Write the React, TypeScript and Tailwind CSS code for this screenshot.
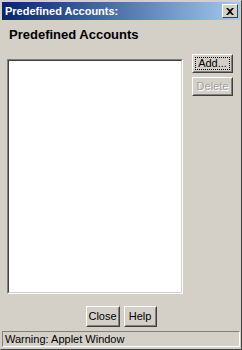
import React from "react";

const font = { fontFamily: "'Liberation Sans', Arial, sans-serif" };

function Btn({ children, disabled, focused, className = "" }: { children: React.ReactNode; disabled?: boolean; focused?: boolean; className?: string }) {
  return (
    <div className={`border border-t-white border-l-white border-r-[#404040] border-b-[#404040] ${className}`}>
      <div className="h-full border border-t-[#d4d0c8] border-l-[#d4d0c8] border-r-[#808080] border-b-[#808080] flex items-center justify-center p-[2px]">
        <div className={`h-full w-full flex items-center justify-center ${focused ? "outline outline-1 outline-dotted outline-black" : ""}`}>
          <span
            className={`text-[11px] leading-none ${disabled ? "text-[#a0a0a0]" : "text-black"}`}
            style={disabled ? { textShadow: "1px 1px 0 #fff" } : undefined}
          >
            {children}
          </span>
        </div>
      </div>
    </div>
  );
}

export default function App() {
  return (
    <div className="w-[242px] h-[350px] bg-[#d4d0c8] flex flex-col border border-t-[#d4d0c8] border-l-[#d4d0c8] border-r-[#404040] border-b-[#404040]" style={font}>
      <div className="h-[18px] mt-[1px] mx-[1px] flex items-center justify-between pl-[3px] pr-[2px] bg-gradient-to-r from-[#0a246a] to-[#a6caf0]">
        <span className="text-white font-bold text-[11px] leading-none">Predefined Accounts:</span>
        <div className="w-[16px] h-[14px] bg-[#d4d0c8] border border-t-white border-l-white border-r-[#404040] border-b-[#404040] flex items-center justify-center">
          <svg width="8" height="7" viewBox="0 0 8 7">
            <path d="M0 0h2l2 2 2-2h2L5 3.5 8 7H6L4 5 2 7H0l3-3.5z" fill="#000" />
          </svg>
        </div>
      </div>
      <div className="px-[7px] pt-[7px] text-[13px] font-bold text-black leading-none">
        <div className="h-[15px] flex items-center pl-[1px]">Predefined Accounts</div>
      </div>
      <div className="flex flex-1 pl-[6px] pr-[8px] pt-[12px]">
        <div className="w-[176px] h-[235px] mt-[5px] border border-t-[#808080] border-l-[#808080] border-r-white border-b-white">
          <div className="w-full h-full bg-white border border-t-[#404040] border-l-[#404040] border-r-[#d4d0c8] border-b-[#d4d0c8]" />
        </div>
        <div className="flex flex-col gap-[4px] ml-auto">
          <Btn focused className="w-[41px] h-[19px]">Add...</Btn>
          <Btn disabled className="w-[41px] h-[19px]">Delete</Btn>
        </div>
      </div>
      <div className="flex justify-center gap-[4px] pb-[4px]">
        <Btn className="w-[34px] h-[21px]">Close</Btn>
        <Btn className="w-[33px] h-[21px]">Help</Btn>
      </div>
      <div className="mx-[1px] mb-[2px] h-[16px] border border-t-[#808080] border-l-[#808080] border-r-white border-b-white flex items-center pl-[2px]">
        <span className="text-[11px] leading-none text-black">Warning: Applet Window</span>
      </div>
    </div>
  );
}
